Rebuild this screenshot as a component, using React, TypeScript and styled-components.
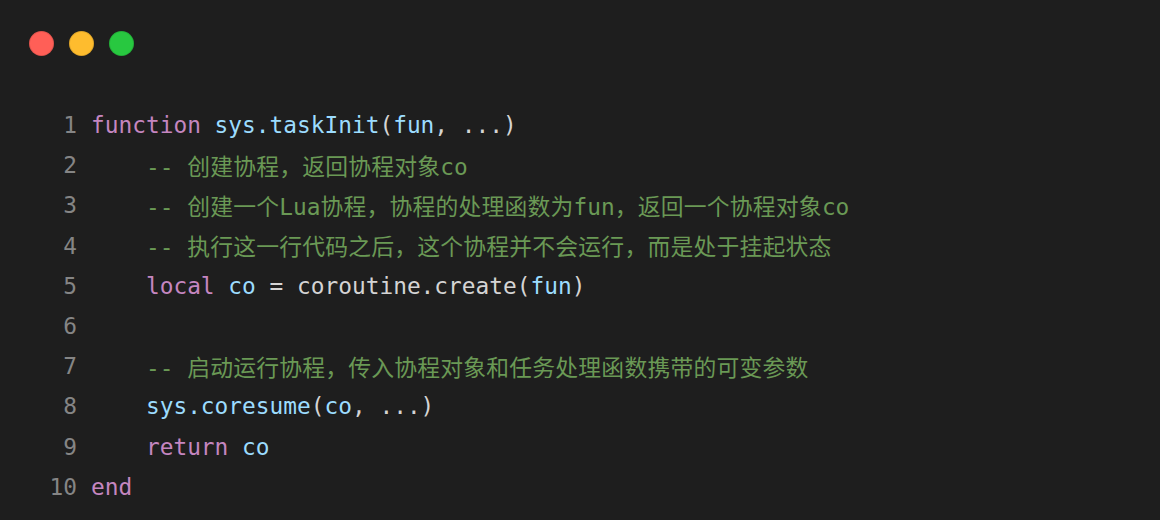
import React from "react";
import styled, { createGlobalStyle } from "styled-components";

const Global = createGlobalStyle`
  html, body { margin: 0; padding: 0; background: #1e1e1e; }
  body { width: 1160px; height: 520px; overflow: hidden; }
`;

const Window = styled.div`
  width: 1160px;
  height: 520px;
  background: #1e1e1e;
  box-sizing: border-box;
  padding: 31px 0 0 29px;
  display: flex;
  flex-direction: column;
`;

const Lights = styled.div`
  display: flex;
  gap: 15px;
`;

const Light = styled.span<{ $c: string }>`
  width: 25px;
  height: 25px;
  border-radius: 50%;
  background: ${(p) => p.$c};
  box-shadow: inset 0 0 0 1px rgba(0, 0, 0, 0.12);
`;

const Code = styled.div`
  margin-top: 49px;
  margin-left: -29px;
  display: flex;
  flex-direction: column;
  font-family: "DejaVu Sans Mono", "Noto Sans CJK SC", monospace;
  font-size: 22.82px;
  color: #d4d4d4;
`;

const Row = styled.div`
  display: flex;
  align-items: center;
  height: 40.2px;
  white-space: pre;
`;

const Num = styled.span`
  width: 77px;
  text-align: right;
  color: #858585;
  padding-right: 14px;
  box-sizing: content-box;
`;

const Text = styled.span``;

const K = styled.span`color: #c586c0;`;
const V = styled.span`color: #9cdcfe;`;
const C = styled.span`color: #6a9955;`;
const P = styled.span`color: #d4d4d4;`;
const Han = styled.span`letter-spacing: 0.2px;`;

function Comment({ text }: { text: string }) {
  const parts = text.split(/([\u3000-\u9fff\uff00-\uffef]+)/);
  return (
    <C>
      {parts.map((p, i) =>
        /[\u3000-\u9fff\uff00-\uffef]/.test(p) ? <Han key={i}>{p}</Han> : <React.Fragment key={i}>{p}</React.Fragment>
      )}
    </C>
  );
}

const lines: React.ReactNode[] = [
  <><K>function</K> <V>sys.taskInit</V><P>(</P><V>fun</V><P>, ...)</P></>,
  <Comment text="    -- 创建协程，返回协程对象co" />,
  <Comment text="    -- 创建一个Lua协程，协程的处理函数为fun，返回一个协程对象co" />,
  <Comment text="    -- 执行这一行代码之后，这个协程并不会运行，而是处于挂起状态" />,
  <>{"    "}<K>local</K> <V>co</V><P>{" = coroutine.create("}</P><V>fun</V><P>)</P></>,
  <></>,
  <Comment text="    -- 启动运行协程，传入协程对象和任务处理函数携带的可变参数" />,
  <>{"    "}<V>sys.coresume</V><P>(</P><V>co</V><P>, ...)</P></>,
  <>{"    "}<K>return</K> <V>co</V></>,
  <><K>end</K></>,
];

export default function App() {
  return (
    <>
      <Global />
      <Window>
        <Lights>
          <Light $c="#ff5f57" />
          <Light $c="#febc2e" />
          <Light $c="#28c840" />
        </Lights>
        <Code>
          {lines.map((l, i) => (
            <Row key={i}>
              <Num>{i + 1}</Num>
              <Text>{l}</Text>
            </Row>
          ))}
        </Code>
      </Window>
    </>
  );
}
